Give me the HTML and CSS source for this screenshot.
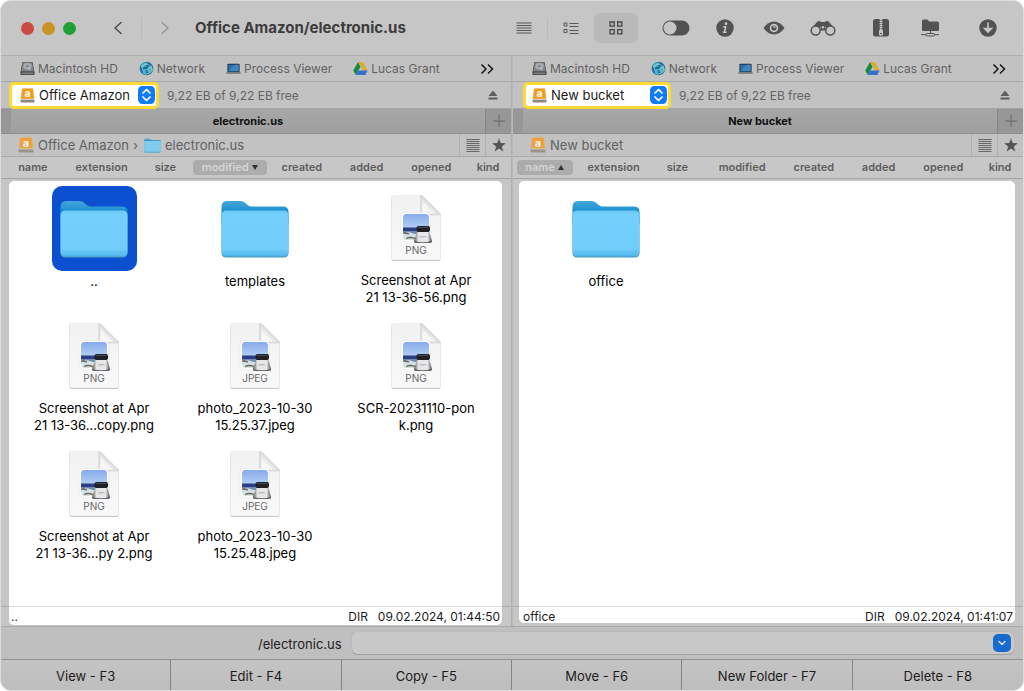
FILE: index.html
```html
<!DOCTYPE html>
<html lang="en">
<head>
<meta charset="utf-8">
<meta name="viewport" content="width=device-width, initial-scale=1">
<title>Office Amazon/electronic.us</title>
<link rel="stylesheet" href="styles.css">
</head>
<body>
<svg class="sprite" width="0" height="0" aria-hidden="true">
  <defs>
    <linearGradient id="g-front" x1="0" y1="0" x2="0" y2="1"><stop offset="0" stop-color="#6ccaf8"/><stop offset=".08" stop-color="#73cffb"/><stop offset=".84" stop-color="#71cdfa"/><stop offset="1" stop-color="#50b5e8"/></linearGradient>
    <linearGradient id="g-back" x1="0" y1="0" x2="0" y2="1"><stop offset="0" stop-color="#45a5da"/><stop offset=".3" stop-color="#2a98d2"/><stop offset=".5" stop-color="#078ac9"/></linearGradient>
    <linearGradient id="g-page" x1="0" y1="0" x2="0" y2="1"><stop offset="0" stop-color="#f1f1f1"/><stop offset="1" stop-color="#f9f9f9"/></linearGradient>
    <linearGradient id="g-fold" x1="0" y1="1" x2=".55" y2=".45"><stop offset="0" stop-color="#fff"/><stop offset=".6" stop-color="#f3f3f3"/><stop offset="1" stop-color="#cfcfcf"/></linearGradient>
    <linearGradient id="g-sky" x1="0" y1="0" x2="0" y2="1"><stop offset="0" stop-color="#86a9ea"/><stop offset="1" stop-color="#b3cff5"/></linearGradient>
    <linearGradient id="g-metal" x1="0" y1="0" x2="1" y2="0"><stop offset="0" stop-color="#555"/><stop offset=".25" stop-color="#e4e4e4"/><stop offset=".75" stop-color="#e9e9ea"/><stop offset="1" stop-color="#555"/></linearGradient>
    <clipPath id="c-photo"><rect x="13" y="20" width="26" height="26" rx="3.500"/></clipPath>
  </defs>
  <symbol id="folder" viewBox="0 0 68 58">
    <path d="M.5 7Q.5 1 6 1h13c3 0 4.500 1 6.500 3 2 2 3.500 2.500 6 2.500H62q5.500 0 5.500 5.500v12H.5z" fill="url(#g-back)"/>
    <rect x=".5" y="11" width="67" height="46.500" rx="4.500" fill="#4b98bd"/>
    <rect x=".5" y="10.500" width="67" height="46" rx="4.500" fill="url(#g-front)"/>
    <path d="M2 51.500h64" stroke="#5bbfec" stroke-width=".7"/>
  </symbol>
  <symbol id="image-page" viewBox="0 0 52 68">
    <path d="M1.500 4Q1.500 2 3.500 2H32l18.500 18.500V65q0 2-2 2h-45q-2 0-2-2z" fill="#bdbdbd"/>
    <path d="M1.500 3.500Q1.500 1.500 3.500 1.500H32L50.500 20v44q0 2-2 2h-45q-2 0-2-2z" fill="url(#g-page)" stroke="#e2e2e2" stroke-width=".5"/>
    <path d="M30 1.500h2L50.500 20v1.500H34q-4 0-4-4z" fill="#aaa" opacity=".3"/>
    <path d="M32 1.500 50.500 20H35q-3 0-3-3z" fill="url(#g-fold)" stroke="#d0d0d0" stroke-width=".4"/>
    <rect x="11" y="18.500" width="29.500" height="29.500" rx="5" fill="#fdfdfd" stroke="#e3e3e3" stroke-width=".5"/>
    <g clip-path="url(#c-photo)">
      <rect x="13" y="20" width="26" height="14" fill="url(#g-sky)"/>
      <rect x="13" y="33.500" width="26" height="4" fill="#2b3f86"/>
      <rect x="13" y="37" width="26" height="3.500" fill="#6f8da8"/>
      <path d="M13 40q5-3 9-1t6 0v7H13z" fill="#d2e2ea"/>
      <path d="M16 44.500q4-2 9 0M14 39l5 .8" stroke="#7a604d" stroke-width="1.300" fill="none"/>
    </g>
    <path d="M27 38h12.500l2.500 9q0 2-3 2H27.500q-4 0-3.500-2z" fill="url(#g-metal)"/>
    <path d="M24 47q9 2.500 18 0 0 2-3 2H27.500q-3.500 0-3.500-2z" fill="#606066"/>
    <rect x="26.500" y="32" width="13.500" height="6" rx="2" fill="#1f2124"/>
    <path d="M28 33.500h10" stroke="#54575a" stroke-width=".8"/>
    <path d="m30 43.500 1.500-1.500 1.500 1.500 1.500-1.500 1.500 1.500" stroke="#8790b0" stroke-width=".8" fill="none"/>
  </symbol>
  <symbol id="amazon-drive" viewBox="0 0 16 16">
    <path d="M2.500.5h11L15.500 12.500H.5z" fill="#d9d6cf"/>
    <path d="M.5 12.500h15v2q0 1-1 1h-13q-1 0-1-1z" fill="#8d8880"/>
    <path d="M3 .5h10q.8 0 1 .8l1 10.200H1L2 1.300q.2-.8 1-.8z" fill="#f49c1c"/>
  </symbol>
  <symbol id="hard-disk" viewBox="0 0 16 16">
    <path d="M2.500 1h11l2 11v2q0 1-1 1h-13q-1 0-1-1v-2z" fill="#4b4f52"/>
    <path d="M3 1.500h10l1.600 9.500H1.400z" fill="#7e8488"/>
    <ellipse cx="8" cy="5.500" rx="4.500" ry="3.700" fill="#a5abae"/><circle cx="8" cy="5.500" r="1.300" fill="#6d7376"/>
    <path d="m8 6 3 4" stroke="#d2d5d7"/><path d="M2 13h12" stroke="#979c9f"/>
  </symbol>
  <symbol id="globe" viewBox="0 0 16 16">
    <circle cx="8" cy="8" r="7.300" fill="#1771a3"/>
    <path d="M2 5q3-5 7-3L8 5 5 7 2 7zM9 7l4-2 2 4-3 4-2-2zM4 9l4 2-1 4-3-2z" fill="#4eb2c5"/>
    <path d="m3 5 5-2 5 3-4 3-5 1zM9 9l2 4-4 1M13 6l1 4-3 3" fill="none" stroke="#b4dce2" stroke-width=".7"/>
  </symbol>
  <symbol id="laptop" viewBox="0 0 16 16">
    <rect x="1.500" y="3" width="13" height="9" rx="1" fill="#252b34"/><rect x="2.500" y="4" width="11" height="7" fill="#2a6db1"/>
    <path d="m2.500 11 7-7h4v7z" fill="#3f86c5"/><path d="M.3 12h15.400v1q0 .7-1 .7H1.300q-1 0-1-.7z" fill="#6d7073"/>
  </symbol>
  <symbol id="cloud-triangle" viewBox="0 0 16 16">
    <path d="M5.400 1 8 6 3 15 .3 10z" fill="#148743"/><path d="M5.400 1h5.200l5.100 9h-5.200z" fill="#d7ad32"/><path d="M5.800 10h9.900L13 15H3z" fill="#376fd0"/>
  </symbol>
  <symbol id="chevrons" viewBox="0 0 14 12"><path d="m1.500 1.500 4.500 4.500-4.500 4.500M8 1.500 12.500 6 8 10.500" fill="none" stroke="#171717" stroke-width="1.500"/></symbol>
  <symbol id="eject" viewBox="0 0 10 10"><path d="m5 .5 4.500 5.500h-9zM.5 7.500h9v2h-9z" fill="#5e5e5e"/></symbol>
  <symbol id="plus" viewBox="0 0 12 12"><path d="M6 0v12M0 6h12" stroke="#666"/></symbol>
  <symbol id="text-lines" viewBox="0 0 14 14"><path d="M.5 1.500h13M.5 3.500h13M.5 5.500h13M.5 7.500h13M.5 9.500h13M.5 11.500h13M.5 13.500h13" stroke="#666" stroke-width="1.100"/></symbol>
  <symbol id="star" viewBox="0 0 14 14"><path d="m7 .2 1.700 4.900 5.200.1-4.100 3.200 1.500 5L7 10.500l-4.300 2.900 1.500-5L.1 5.200l5.200-.1z" fill="#555"/></symbol>
  <symbol id="updown" viewBox="0 0 17 18">
    <rect width="17" height="18" rx="4.500" fill="#117cf7"/><path d="M5 7l3.500-3.500L12 7M5 11l3.500 3.500L12 11" fill="none" stroke="#fff" stroke-width="1.700" stroke-linecap="round" stroke-linejoin="round"/>
  </symbol>
</svg>

<main class="window">
  <header class="titlebar">
    <div class="lights"><button class="light light-close" aria-label="Close"></button><button class="light light-min" aria-label="Minimize"></button><button class="light light-zoom" aria-label="Zoom"></button></div>
    <nav class="history" aria-label="History">
      <button aria-label="Back"><svg width="10" height="14" viewBox="0 0 10 14"><path d="M8 1.500 2 7l6 5.500" fill="none" stroke="#4b4b4b" stroke-width="1.500" stroke-linecap="round" stroke-linejoin="round"/></svg></button>
      <span class="rule"></span>
      <button aria-label="Forward"><svg width="10" height="14" viewBox="0 0 10 14"><path d="m2 1.500 6 5.500-6 5.500" fill="none" stroke="#969696" stroke-width="1.500" stroke-linecap="round" stroke-linejoin="round"/></svg></button>
    </nav>
    <h1 class="title">Office Amazon/electronic.us</h1>
    <div class="tools">
      <div class="tool-group views">
        <button class="tool" aria-label="Full list"><svg width="16" height="12" viewBox="0 0 16 12"><path d="M.5 1h15M.5 3.500h15M.5 6h15M.5 8.500h15M.5 11h15" stroke="#565656"/></svg></button>
        <span class="rule"></span>
        <button class="tool" aria-label="Brief list"><svg width="16" height="12" viewBox="0 0 16 12"><path d="M6.500 1.500h9M6.500 4.500h9M6.500 8.500h9M6.500 11.500h9" stroke="#565656"/><path d="M1 1h3v3H1zM1 7.500h3v3H1z" fill="none" stroke="#565656"/></svg></button>
        <button class="tool tool-on" aria-label="Icons"><svg width="14" height="14" viewBox="0 0 14 14"><path d="M1 1h4.200v4.200H1zM8.700 1h4.200v4.200H8.700zM1 8.700h4.200v4.200H1zM8.700 8.700h4.200v4.200H8.700z" fill="none" stroke="#454545" stroke-width="1.300"/></svg></button>
      </div>
      <div class="tool-group">
        <button class="tool" aria-label="Toggle hidden files"><svg width="28" height="16" viewBox="0 0 28 16"><rect x=".5" y=".5" width="27" height="15" rx="7.500" fill="#525252"/><circle cx="8" cy="8" r="6.500" fill="#c6c6c6"/></svg></button>
        <button class="tool" aria-label="Info"><svg width="18" height="18" viewBox="0 0 18 18"><circle cx="9" cy="9" r="8.700" fill="#525252"/><circle cx="10" cy="4.700" r="1.400" fill="#c6c6c6"/><path d="M7.200 7.700h2.500l-1.300 5.500h2.200M6.800 13.200h1.800" fill="none" stroke="#c6c6c6" stroke-width="1.600" stroke-linejoin="round"/></svg></button>
        <button class="tool" aria-label="Quick Look"><svg width="22" height="14" viewBox="0 0 22 14"><path d="M.5 7Q5 .5 11 .5T21.500 7Q17 13.500 11 13.500T.5 7z" fill="#525252"/><circle cx="11" cy="7" r="4.300" fill="#c6c6c6"/><circle cx="11" cy="7" r="2.600" fill="#525252"/><circle cx="11.500" cy="6" r="1" fill="#c6c6c6"/></svg></button>
        <button class="tool" aria-label="Search"><svg width="26" height="16" viewBox="0 0 26 16"><path d="M1 9 7 2q2-2 4 0h4q2-2 4 0l6 7-5 2-5-5h-4L6 11z" fill="#525252"/><circle cx="5.700" cy="10.500" r="4.500" fill="#c6c6c6" stroke="#525252" stroke-width="1.500"/><circle cx="20.300" cy="10.500" r="4.500" fill="#c6c6c6" stroke="#525252" stroke-width="1.500"/><path d="M10.500 5.500h5v5h-5z" fill="#525252"/><circle cx="13" cy="7.300" r="1.200" fill="#c6c6c6"/></svg></button>
      </div>
      <div class="tool-group">
        <button class="tool" aria-label="Archive"><svg width="16" height="18" viewBox="0 0 16 18"><rect width="16" height="17.500" rx="2.500" fill="#525252"/><path d="M8 0v11" stroke="#c6c6c6" stroke-width="3" stroke-dasharray="1 1"/><path d="M8 0v11" stroke="#c6c6c6"/><rect x="6" y="11" width="4" height="5.500" rx="1" fill="#c6c6c6"/><path d="M7 14.500h2" stroke="#525252"/></svg></button>
        <button class="tool" aria-label="Network folder"><svg width="18" height="18" viewBox="0 0 18 18"><path d="M1 2Q1 .5 2.500.5h4L8 2.500h8.500q1.500 0 1.500 1.500v7q0 1-1 1H2q-1 0-1-1z" fill="#525252"/><path d="M9.500 12v3M0 15.700h5M13 15.700h5" stroke="#525252"/><rect x="5" y="14.500" width="8.500" height="2.500" rx="1.200" fill="none" stroke="#525252"/></svg></button>
      </div>
      <div class="tool-group">
        <button class="tool" aria-label="Downloads"><svg width="18" height="18" viewBox="0 0 18 18"><circle cx="9" cy="9" r="8.700" fill="#525252"/><path d="M9 3.500V12M5.500 9.500 9 13l3.500-3.500z" stroke="#c6c6c6" stroke-width="1.600" fill="#c6c6c6"/></svg></button>
      </div>
    </div>
  </header>

  <div class="panes">
    <section class="pane pane-left" aria-label="Left pane">
      <nav class="bookmarks">
        <a href="#"><svg><use href="#hard-disk"/></svg>Macintosh HD</a>
        <a href="#"><svg><use href="#globe"/></svg>Network</a>
        <a href="#"><svg><use href="#laptop"/></svg>Process Viewer</a>
        <a href="#"><svg><use href="#cloud-triangle"/></svg>Lucas Grant</a>
        <button class="more" aria-label="More bookmarks"><svg width="14" height="12"><use href="#chevrons"/></svg></button>
      </nav>
      <div class="drive-row">
        <div class="drive drive-wide">
          <svg class="drive-icon" viewBox="0 0 16 16"><use href="#amazon-drive"/><text x="8" y="10">a</text></svg>
          <select aria-label="Left drive"><option>Office Amazon</option></select>
          <svg class="updown"><use href="#updown"/></svg>
        </div>
        <span class="free">9,22 EB of 9,22 EB free</span>
        <button class="eject" aria-label="Eject"><svg width="10" height="10"><use href="#eject"/></svg></button>
      </div>
      <div class="tabs"><button class="tab">electronic.us</button><button class="tab-add" aria-label="New tab"><svg width="12" height="12"><use href="#plus"/></svg></button></div>
      <div class="path">
        <a href="#"><svg class="crumb-drive" viewBox="0 0 16 16"><use href="#amazon-drive"/><text x="8" y="10">a</text></svg>Office Amazon</a><span class="crumb-arrow">›</span><a href="#"><svg class="crumb-folder"><use href="#folder"/></svg>electronic.us</a>
        <button class="path-button path-button-first" aria-label="History list"><svg width="14" height="14"><use href="#text-lines"/></svg></button>
        <button class="path-button" aria-label="Favorites"><svg width="14" height="14"><use href="#star"/></svg></button>
      </div>
      <div class="columns">
        <button>name</button><button>extension</button><button>size</button><button class="sorted">modified <i class="down"></i></button><button>created</button><button>added</button><button>opened</button><button>kind</button>
      </div>
      <div class="stage">
        <div class="files">
          <figure class="file selected"><div class="tile"><svg class="folder"><use href="#folder"/></svg></div><figcaption>..</figcaption></figure>
          <figure class="file"><div class="tile"><svg class="folder"><use href="#folder"/></svg></div><figcaption>templates</figcaption></figure>
          <figure class="file"><div class="tile"><svg class="page"><use href="#image-page"/><text x="26" y="60">PNG</text></svg></div><figcaption>Screenshot at Apr<br>21 13-36-56.png</figcaption></figure>
          <figure class="file"><div class="tile"><svg class="page"><use href="#image-page"/><text x="26" y="60">PNG</text></svg></div><figcaption>Screenshot at Apr<br>21 13-36…copy.png</figcaption></figure>
          <figure class="file"><div class="tile"><svg class="page"><use href="#image-page"/><text x="26" y="60">JPEG</text></svg></div><figcaption>photo_2023-10-30<br>15.25.37.jpeg</figcaption></figure>
          <figure class="file"><div class="tile"><svg class="page"><use href="#image-page"/><text x="26" y="60">PNG</text></svg></div><figcaption>SCR-20231110-pon<br>k.png</figcaption></figure>
          <figure class="file"><div class="tile"><svg class="page"><use href="#image-page"/><text x="26" y="60">PNG</text></svg></div><figcaption>Screenshot at Apr<br>21 13-36…py 2.png</figcaption></figure>
          <figure class="file"><div class="tile"><svg class="page"><use href="#image-page"/><text x="26" y="60">JPEG</text></svg></div><figcaption>photo_2023-10-30<br>15.25.48.jpeg</figcaption></figure>
        </div>
        <div class="status"><span>..</span><span class="status-kind">DIR</span><time>09.02.2024, 01:44:50</time></div>
      </div>
    </section>

    <section class="pane pane-right" aria-label="Right pane">
      <nav class="bookmarks">
        <a href="#"><svg><use href="#hard-disk"/></svg>Macintosh HD</a>
        <a href="#"><svg><use href="#globe"/></svg>Network</a>
        <a href="#"><svg><use href="#laptop"/></svg>Process Viewer</a>
        <a href="#"><svg><use href="#cloud-triangle"/></svg>Lucas Grant</a>
        <button class="more" aria-label="More bookmarks"><svg width="14" height="12"><use href="#chevrons"/></svg></button>
      </nav>
      <div class="drive-row">
        <div class="drive">
          <svg class="drive-icon" viewBox="0 0 16 16"><use href="#amazon-drive"/><text x="8" y="10">a</text></svg>
          <select aria-label="Right drive"><option>New bucket</option></select>
          <svg class="updown"><use href="#updown"/></svg>
        </div>
        <span class="free">9,22 EB of 9,22 EB free</span>
        <button class="eject" aria-label="Eject"><svg width="10" height="10"><use href="#eject"/></svg></button>
      </div>
      <div class="tabs"><button class="tab">New bucket</button><button class="tab-add" aria-label="New tab"><svg width="12" height="12"><use href="#plus"/></svg></button></div>
      <div class="path">
        <a href="#"><svg class="crumb-drive" viewBox="0 0 16 16"><use href="#amazon-drive"/><text x="8" y="10">a</text></svg>New bucket</a>
        <button class="path-button path-button-first" aria-label="History list"><svg width="14" height="14"><use href="#text-lines"/></svg></button>
        <button class="path-button" aria-label="Favorites"><svg width="14" height="14"><use href="#star"/></svg></button>
      </div>
      <div class="columns">
        <button class="sorted">name <i class="up"></i></button><button>extension</button><button>size</button><button>modified</button><button>created</button><button>added</button><button>opened</button><button>kind</button>
      </div>
      <div class="stage">
        <div class="files">
          <figure class="file"><div class="tile"><svg class="folder"><use href="#folder"/></svg></div><figcaption>office</figcaption></figure>
        </div>
        <div class="status"><span>office</span><span class="status-kind">DIR</span><time>09.02.2024, 01:41:07</time></div>
      </div>
    </section>
  </div>

  <form class="command">
    <label for="command">/electronic.us</label>
    <div class="combo">
      <input id="command" type="text" autocomplete="off">
      <button type="button" aria-label="Command history"><svg width="18" height="18" viewBox="0 0 18 18"><path d="m6 7.500 3 3 3-3" fill="none" stroke="#d4dff0" stroke-width="1.600" stroke-linecap="round" stroke-linejoin="round"/></svg></button>
    </div>
  </form>

  <footer class="actions">
    <button>View - F3</button><button>Edit - F4</button><button>Copy - F5</button><button>Move - F6</button><button>New Folder - F7</button><button>Delete - F8</button>
  </footer>
</main>
</body>
</html>
```

FILE: styles.css
```css
* { box-sizing: border-box; }

body {
  display: flex;
  min-height: 100vh;
  margin: 0;
  padding: 1px;
  background: #fff;
  color: #1c1c1c;
  font: 13px/17px Inter, "Liberation Sans", sans-serif;
}

button, select, input {
  margin: 0;
  padding: 0;
  border: 0;
  background: none;
  color: inherit;
  font: inherit;
}

button svg { display: block; }
a { color: inherit; text-decoration: none; }
.sprite { position: absolute; }

.window {
  display: flex;
  flex: 1;
  flex-direction: column;
  min-width: 0;
  overflow: hidden;
  border-radius: 10px;
  background: #c2c2c2;
  box-shadow: 0 0 0 1px #dcdcdc;
}

/* Title bar */
.titlebar {
  display: flex;
  align-items: center;
  height: 55px;
  padding: 0 13px 0 20px;
  border-bottom: 1px solid #adadad;
  background: #c6c6c6;
}
.lights { display: flex; gap: 8px; }
.light { width: 13px; height: 13px; border-radius: 50%; }
.light-close { background: #cb4b43; }
.light-min { background: #c99426; }
.light-zoom { background: #20a035; }
.history { display: flex; align-items: center; margin-left: 27px; }
.history button { display: grid; place-items: center; width: 30px; height: 28px; }
.history .rule { margin: 0 8px; }
.rule { width: 1px; height: 21px; background: #b9b9b9; }
.title { margin: 0 0 0 15px; color: #3c3c3c; font-size: 15px; font-weight: 700; line-height: 20px; white-space: nowrap; }
.tools { display: flex; gap: 14px; margin-left: auto; }
.tool-group { display: flex; align-items: center; gap: 5px; }
.views { gap: 1px; margin-right: 2px; }
.tool { display: grid; place-items: center; width: 44px; height: 30px; border-radius: 6px; }
.tool-on { background: #b9b9b9; }

/* Panes */
.panes { display: grid; flex: 1; grid-template-columns: 1fr 1fr; }
.pane { display: flex; flex-direction: column; min-width: 0; }
.pane-left { border-right: 1px solid #b0b0b0; }
.pane-right { border-left: 1px solid #b9b9b9; }

.bookmarks {
  display: flex;
  align-items: center;
  gap: 21px;
  height: 26px;
  padding: 0 17px 0 19px;
  border-bottom: 1px solid #a9a9a9;
  color: #626262;
  font-size: 12px;
  white-space: nowrap;
}
.bookmarks a { display: flex; align-items: center; gap: 3px; }
.bookmarks a svg { width: 15px; height: 15px; }
.more { margin-left: auto; }

.drive-row {
  display: flex;
  align-items: center;
  height: 27px;
  padding: 0 13px 0 8px;
  border-bottom: 1px solid #a3a3a3;
}
.pane-right .drive-row { padding-left: 10px; }
.drive {
  z-index: 1;
  display: flex;
  flex: none;
  align-items: center;
  width: 148px;
  height: 27px;
  padding: 0 1px 0 6px;
  border: 3px solid #fddb33;
  border-radius: 5px;
  background: #fff;
}
.drive-wide { width: 150px; padding-left: 8px; }
.drive-icon { flex: none; width: 15px; height: 15px; margin-right: 4px; }
.drive-icon text, .crumb-drive text { fill: #fff; font: 700 11px Inter, sans-serif; text-anchor: middle; }
.drive select { flex: 1; min-width: 0; height: 20px; appearance: none; }
.updown { flex: none; width: 17px; height: 18px; }
.free { margin-left: 8px; color: #656565; font-size: 12px; }
.eject { margin-left: auto; }

.tabs { display: flex; height: 25px; padding-left: 10px; border-bottom: 1px solid #8f8f8f; background: #979797; }
.tab { flex: 1; background: linear-gradient(#a7a7a7, #9f9f9f); color: #111; font-size: 11px; font-weight: 700; }
.tab-add { display: grid; place-items: center; width: 26px; border-left: 1px solid #858585; }

.path {
  display: flex;
  align-items: center;
  height: 23px;
  padding-left: 17px;
  border-bottom: 1px solid #a9a9a9;
  color: #616161;
}
.path a { display: flex; align-items: center; gap: 4px; }
.crumb-drive { width: 16px; height: 16px; opacity: .8; }
.crumb-folder { width: 17px; height: 15px; opacity: .8; }
.crumb-arrow { margin: 0 6px 0 4px; }
.path-button { display: grid; place-items: center; width: 26px; height: 22px; border-left: 1px solid #b1b1b1; }
.path-button-first { margin-left: auto; }

.columns {
  display: grid;
  grid-template-columns: 64fr 74fr 54fr 76fr 68fr 62fr 68fr 46fr;
  align-items: center;
  height: 22px;
  border-bottom: 1px solid #a3a3a3;
  background: #c7c7c7;
  color: #5e5e5e;
  font-size: 11px;
  font-weight: 600;
  line-height: 15px;
}
.columns button { min-width: 0; white-space: nowrap; }
.columns .sorted { margin: 0 1px; border-radius: 4px; background: #acacac; color: #d4d4d4; }
.pane-right .columns .sorted { margin: 0 4px; }
.sorted i { display: inline-block; margin: 0 0 1px 1px; border: 3px solid transparent; }
.sorted .down { border-top: 5px solid #303030; border-bottom: 0; }
.sorted .up { border-top: 0; border-bottom: 5px solid #303030; }

/* File lists */
.stage {
  position: relative;
  display: flex;
  flex: 1;
  flex-direction: column;
  padding: 2px 9px 1px 8px;
  background: #c6c6c6;
}
.pane-right .stage { padding: 2px 8px 3px 6px; }
.stage::after { content: ""; position: absolute; right: 0; bottom: 19px; left: 0; height: 1px; background: #0002; }
.files {
  display: grid;
  flex: 1;
  grid-template-columns: repeat(auto-fill, 160px);
  grid-auto-rows: 120px;
  align-content: start;
  gap: 8px 1px;
  padding: 5px 0 0 5px;
  border-radius: 5px 5px 0 0;
  background: #fff;
}
.pane-right .files { padding-left: 7px; }
.file { display: flex; flex-direction: column; align-items: center; margin: 0; color: #000; text-align: center; }
.tile { display: grid; place-items: center; width: 85px; height: 85px; margin-bottom: 2px; border-radius: 10px; }
.selected .tile { background: #0b50d0; }
.folder { width: 68px; height: 58px; }
.page { width: 52px; height: 68px; }
.page text { fill: #666; font: 10px Inter, sans-serif; text-anchor: middle; }
.status {
  display: flex;
  align-items: center;
  height: 19px;
  padding: 2px 2px 0;
  border-radius: 0 0 5px 5px;
  background: #fff;
  font-size: 12px;
}
.pane-right .status { height: 17px; padding: 4px 2px 0 4px; }
.status-kind { margin: 0 10px 0 auto; }

/* Command line */
.command {
  display: grid;
  grid-template-columns: 341fr 663fr;
  align-items: center;
  gap: 10px;
  height: 34px;
  padding-right: 9px;
  border-top: 1px solid #aaa;
  border-bottom: 1px solid #929292;
  background: #bfbfbf;
}
.command label { padding-top: 2px; text-align: right; }
.combo { display: flex; align-items: center; height: 22px; padding: 0 3px 0 6px; border-radius: 5px; background: #c8c8c8; box-shadow: 0 0 1px #7778, 0 1px 0 #a5a5a5; }
.combo input { flex: 1; min-width: 0; height: 20px; outline: 0; }
.combo button { border-radius: 5px; background: #176bce; }

.actions { display: grid; grid-template-columns: repeat(6, 1fr); height: 30px; background: linear-gradient(#c4c4c4, #bebebe); }
.actions button { padding-top: 2px; border-right: 1px solid #858585; }
.actions button:last-child { border-right: 0; }
```
